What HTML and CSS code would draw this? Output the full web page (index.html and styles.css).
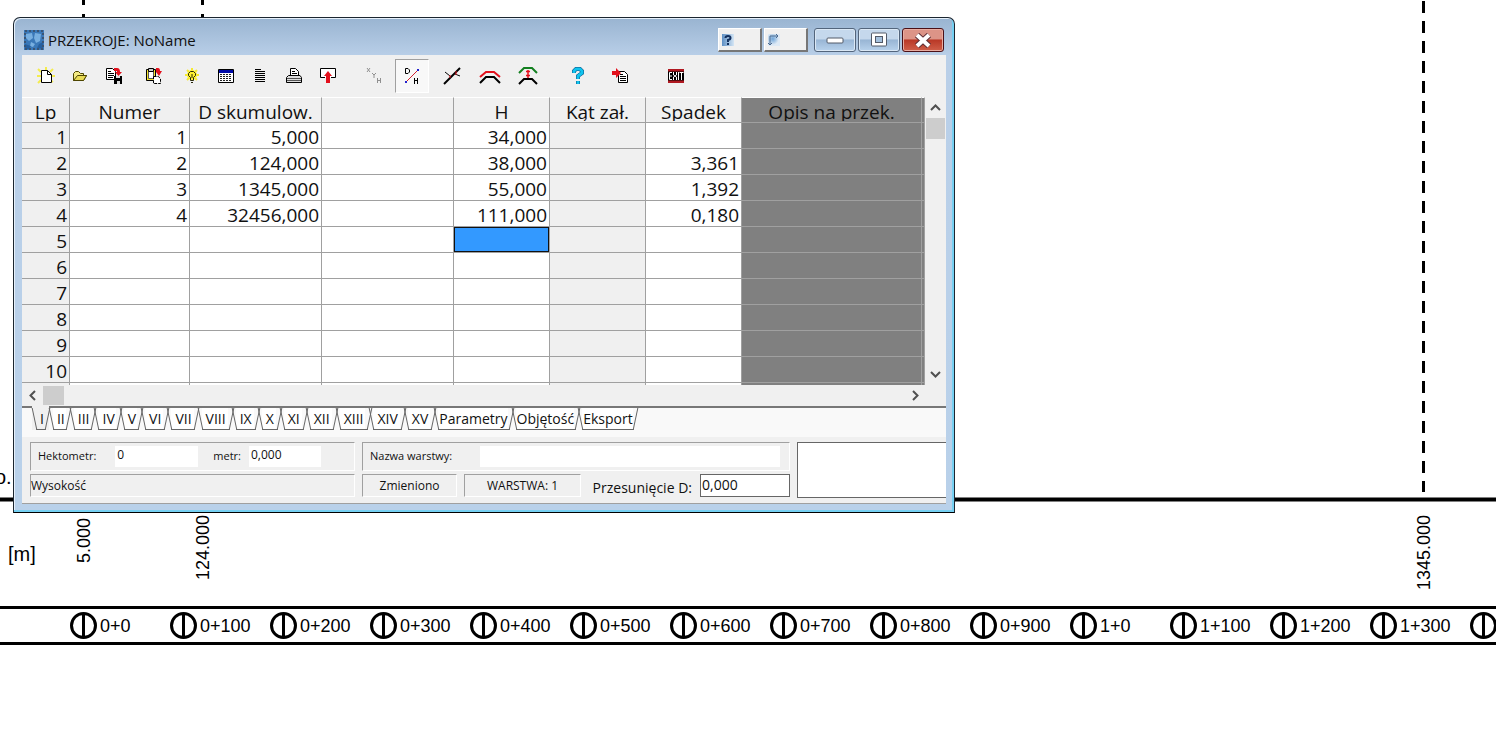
FILE: index.html
```
<!DOCTYPE html>
<html lang="pl">
<head>
<meta charset="utf-8">
<title>PRZEKROJE: NoName</title>
<link rel="stylesheet" href="styles.css">
</head>
<body>
<svg class="drawing" role="img" aria-label="Profil">
  <defs>
    <g id="mark"><circle r="12" fill="#fff" stroke="#000" stroke-width="3"/><path d="M0-12V12" stroke="#000" stroke-width="3"/></g>
  </defs>
  <g stroke="#000" stroke-width="3">
    <path d="M83.5 -6V17M202.5 -6V17" stroke-dasharray="11 9"/>
    <path d="M1423.500 1V492" stroke-dasharray="12 8"/>
    <line x1="0" x2="100%" y1="499.500" y2="499.500" stroke-width="4"/>
    <line x1="0" x2="100%" y1="607.500" y2="607.500"/>
    <line x1="0" x2="100%" y1="643.500" y2="643.500"/>
  </g>
  <g class="cad">
    <text class="unit" x="-5" y="484">o.</text>
    <text class="unit" x="8" y="561">[m]</text>
    <text transform="translate(90 563) rotate(-90)">5.000</text>
    <text transform="translate(209 580) rotate(-90)">124.000</text>
    <text transform="translate(1430 590) rotate(-90)">1345.000</text>
    <text x="100" y="632">0+0</text><text x="200" y="632">0+100</text><text x="300" y="632">0+200</text>
    <text x="400" y="632">0+300</text><text x="500" y="632">0+400</text><text x="600" y="632">0+500</text>
    <text x="700" y="632">0+600</text><text x="800" y="632">0+700</text><text x="900" y="632">0+800</text>
    <text x="1000" y="632">0+900</text><text x="1100" y="632">1+0</text><text x="1200" y="632">1+100</text>
    <text x="1300" y="632">1+200</text><text x="1400" y="632">1+300</text>
  </g>
  <use href="#mark" x="83.500" y="625.500"/><use href="#mark" x="183.500" y="625.500"/><use href="#mark" x="283.500" y="625.500"/>
  <use href="#mark" x="383.500" y="625.500"/><use href="#mark" x="483.500" y="625.500"/><use href="#mark" x="583.500" y="625.500"/>
  <use href="#mark" x="683.500" y="625.500"/><use href="#mark" x="783.500" y="625.500"/><use href="#mark" x="883.500" y="625.500"/>
  <use href="#mark" x="983.500" y="625.500"/><use href="#mark" x="1083.500" y="625.500"/><use href="#mark" x="1183.500" y="625.500"/>
  <use href="#mark" x="1283.500" y="625.500"/><use href="#mark" x="1383.500" y="625.500"/><use href="#mark" x="1483.500" y="625.500"/>
</svg>

<main class="window">
  <header class="titlebar">
    <svg class="app-icon" width="20" height="20" viewBox="0 0 20 20"><rect width="20" height="20" fill="#3a78b8"/><path d="M2 4L8 3L9 8L5 11L2 8ZM11 3L17 4L16 11L12 13L10 8ZM7 12L11 14L9 17L6 16Z" fill="#78afe0"/><path d="M1 14L7 16L5 19L1 19ZM15 14L19 12V19L13 18Z" fill="#27609f"/><rect x="1" y="1" width="18" height="18" fill="none" stroke="#3a5575" stroke-width="2" stroke-dasharray="2 2"/></svg>
    <h1>PRZEKROJE: NoName</h1>
    <div class="extra">
      <button class="flat" aria-label="Pomoc"><svg width="12" height="12" viewBox="0 0 12 12"><defs><linearGradient id="hb"><stop offset="0" stop-color="#5d8fc4"/><stop offset="1" stop-color="#d5e6f5"/></linearGradient></defs><rect width="12" height="12" fill="url(#hb)"/><path d="M3.500 4Q3.500 2 6 2T8.500 4Q8.500 5.500 6 6V8M6 9V11" fill="none" stroke="#12305e" stroke-width="2"/></svg></button>
      <button class="flat" aria-label="Obszar"><svg width="12" height="12" viewBox="0 0 12 12"><defs><radialGradient id="ob" cx=".4" cy=".4"><stop offset="0" stop-color="#6ea4d8"/><stop offset="1" stop-color="#dfeaf5"/></radialGradient></defs><rect width="12" height="12" fill="url(#ob)"/><path d="M2 11V2H10M0 9L2 11L4 9M8 0L10 2L8 4" fill="none" stroke="#496a91"/></svg></button>
    </div>
    <div class="controls">
      <button aria-label="Minimalizuj"><svg width="18" height="12" viewBox="0 0 18 12"><rect x="1" y="4" width="16" height="5" rx="1" fill="#fff" stroke="#535a68"/></svg></button>
      <button aria-label="Maksymalizuj"><svg width="18" height="16" viewBox="0 0 18 16"><rect x="1.500" y="1" width="15" height="13" rx="1" fill="#fff" stroke="#535a68"/><rect x="5.500" y="4.500" width="7" height="6" fill="#a4c0dc" stroke="#535a68"/></svg></button>
      <button class="close" aria-label="Zamknij"><svg width="18" height="15" viewBox="0 0 18 15"><path d="M3 2L15 13M15 2L3 13" stroke="#5c3036" stroke-width="6"/><path d="M3 2L15 13M15 2L3 13" stroke="#fff" stroke-width="4"/></svg></button>
    </div>
  </header>

  <div class="client">
    <nav class="toolbar" aria-label="Narzędzia">
      <button aria-label="Nowy"><svg viewBox="0 0 18 18"><path d="M1 2L4 5M9 0V3M16 2L13 5M0 9H4M1 16L4 13M16 15L13 13M14 9H18" stroke="#f4ec50" stroke-width="2"/><path d="M4.500 3.500H10.500L14.500 7.500V15.500H4.500Z" fill="#fff" stroke="#000"/><path d="M10.500 3.500V7.500H14.500" fill="none" stroke="#000"/></svg></button>
      <button aria-label="Otwórz"><svg viewBox="0 0 18 18"><path d="M2.500 13.500V6.500L4.500 4.500H7.500L9.500 6.500H12.500V8.500H15.500L12.500 13.500Z" fill="#f3ea84" stroke="#4d4500"/><path d="M2.500 13.500L6.500 8.500H15.500L12.500 13.500Z" fill="#e9db55" stroke="#4d4500"/></svg></button>
      <button aria-label="Zapisz"><svg viewBox="0 0 18 18"><path d="M1.500 1.500H7.500L10.500 4.500V12.500H1.500Z" fill="#fff" stroke="#000"/><path d="M3 4.500H6M3 6.500H9M3 8.500H9M3 10.500H8" stroke="#000"/><path d="M9 1H12Q15 1 15 5H17L13.500 9L10 5H12V4H9Z" fill="#e3101c"/><path d="M9 9H17V17H9Z" fill="#000"/><path d="M11 9H15V11H11ZM12 14H15V17H12Z" fill="#ddd"/></svg></button>
      <button class="gap-6" aria-label="Wklej"><svg viewBox="0 0 18 18"><path d="M1.500 2.500H10.500V13.500H1.500Z" fill="#f5e52e" stroke="#000"/><path d="M3.500 4.500H8.500V11.500H3.500Z" fill="#fff" stroke="#555"/><path d="M3.500 1.500H8.500V4.500H3.500Z" fill="#ccc" stroke="#000"/><path d="M11 1H13Q15 1 15 4H17L14 9L11 5Z" fill="#e3101c"/><path d="M8.500 9.500H13.500L15.500 12V16.500H8.500Z" fill="#fff" stroke="#000" stroke-dasharray="3 1"/></svg></button>
      <button class="gap-4" aria-label="Podpowiedź"><svg viewBox="0 0 18 18"><circle cx="9" cy="8" r="5" fill="#fff12e"/><path d="M9 1V3M4 3L6 5M14 3L12 5M2 8H4M14 8H16M4 13L6 11M14 13L12 11" stroke="#f6ea30" stroke-width="2"/><path d="M7.500 10.500L5.500 8.500V6.500L7.500 4.500H10.500L12.500 6.500V8.500L10.500 10.500V13.500H7.500ZM9 7V11M8 15.500H10" fill="none" stroke="#26260a"/></svg></button>
      <button aria-label="Tabela"><svg viewBox="0 0 18 18"><path d="M1.500 2.500H16.500V15.500H1.500Z" fill="#fff" stroke="#000"/><path d="M2 3H16V6H2Z" fill="#000ba8"/><path d="M3 7.500H15M3 9.500H15M3 11.500H15M3 13.500H15" stroke="#222" stroke-dasharray="2 1"/></svg></button>
      <button aria-label="Lista"><svg viewBox="0 0 18 18"><path d="M4 2.500H10M4 4.500H14M4 6.500H14M4 8.500H14M4 10.500H14M4 12.500H14M4 14.500H14" stroke="#000"/></svg></button>
      <button aria-label="Drukuj"><svg viewBox="0 0 18 18"><path d="M5.500 8.500V1.500H10.500L13.500 4.500V8.500Z" fill="#fff" stroke="#000"/><path d="M7 4.500H10M7 6.500H12" stroke="#000"/><path d="M3.500 8.500H15L16.500 10.500V15.500H1.500V10.500Z" fill="#ddd" stroke="#000"/><path d="M2 11.500H16M2 13.500H16" stroke="#555"/></svg></button>
      <button aria-label="Eksportuj"><svg viewBox="0 0 18 18"><path d="M1.500 10.500V1.500H16.500V10.500H12M1.500 10.500H6" fill="#fff" stroke="#000"/><path d="M9 4L13 9H11V16H7V9H5Z" fill="#e3101c"/></svg></button>
      <button class="gap-12" aria-label="XYH"><svg viewBox="0 0 18 18"><path d="M2 1L5 5M5 1L2 5M7 6L9 8L11 6M9 8V11M12.500 11V16M15.500 11V16M12 13.500H16" fill="none" stroke="#909090"/></svg></button>
      <button class="pressed gap-4" aria-label="D/H"><svg viewBox="0 0 18 18"><path d="M2.500 1.500H5L6.500 3V5L5 6.500H2.500ZM11.500 11V17M14.500 11V17M12 13.500H15" fill="none" stroke="#000"/><path d="M3 15L15 3" stroke="#d02030"/><path d="M2 14H4V16H2ZM14 2H16V4H14Z" fill="#22c"/></svg></button>
      <button class="gap-6" aria-label="Nachylenie"><svg viewBox="0 0 18 18"><path d="M1 17L17 1" stroke="#000" stroke-width="2"/><path d="M2 5L7 9M12 7L17 9" stroke="#000"/><path d="M7 8V11M13 4V8" stroke="#e3101c"/></svg></button>
      <button class="gap-4" aria-label="Przekrój"><svg width="22" viewBox="0 0 22 18"><path d="M1 10L7 5H15L21 10" fill="none" stroke="#e3101c" stroke-width="2"/><path d="M1 16L7 10H15L21 16" fill="none" stroke="#000" stroke-width="2"/></svg></button>
      <button class="gap-4" aria-label="Przesuń przekrój"><svg width="20" viewBox="0 0 20 18"><path d="M1 6L6 1H14L19 6" fill="none" stroke="#138020" stroke-width="2"/><path d="M1 17L6 12H14L19 17" fill="none" stroke="#000" stroke-width="2"/><path d="M10 3V11M8 4.500H12M8 8.500H12" stroke="#e3101c" stroke-width="1.500"/></svg></button>
      <button class="gap-16" aria-label="Pomoc programu"><svg viewBox="0 0 18 18"><path d="M5 6V4L7 2H11L13 4V6L9 9V12M9 14V17" fill="none" stroke="#0a4c80" stroke-width="4"/><path d="M5 6V4L7 2H11L13 4V6L9 9V12M9 14V17" fill="none" stroke="#10c4ee" stroke-width="3"/></svg></button>
      <button class="gap-8" aria-label="Import"><svg viewBox="0 0 18 18"><path d="M7.500 4.500H13.500L16.500 7.500V15.500H7.500Z" fill="#fff" stroke="#000"/><path d="M9 7.500H12M9 9.500H15M9 11.500H15M9 13.500H15" stroke="#000"/><path d="M1 4H5V1L10 6L5 11V8H1Z" fill="#e3101c"/></svg></button>
      <button class="gap-22" aria-label="Wyjście"><svg viewBox="0 0 18 18"><path d="M1 2H17V16H1Z" fill="#b01820"/><path d="M1 4.500H17V13.500H1Z" fill="#000"/><path d="M5 5.500H2.500V12.500H5M2.500 9H5M6.500 5V8L9.500 10V13M9.500 5V8L6.500 10V13M11.500 5V13M12.500 5.500H16.500M14.500 5.500V13" fill="none" stroke="#fff"/></svg></button>
    </nav>

    <div class="sheet">
      <div class="grid-clip">
        <table>
          <colgroup><col class="c-lp"><col class="c-num"><col class="c-wide"><col class="c-wide"><col class="c-mid"><col class="c-mid"><col class="c-mid"><col class="c-desc"><col></colgroup>
          <thead><tr><th><span>Lp</span></th><th><span>Numer</span></th><th><span>D skumulow.</span></th><th></th><th><span>H</span></th><th><span>Kąt zał.</span></th><th><span>Spadek</span></th><th class="dark"><span>Opis na przek.</span></th><th class="dark"></th></tr></thead>
          <tbody>
            <tr><th>1</th><td>1</td><td>5,000</td><td></td><td>34,000</td><td class="off"></td><td></td><td class="dark"></td><td class="dark"></td></tr>
            <tr><th>2</th><td>2</td><td>124,000</td><td></td><td>38,000</td><td class="off"></td><td>3,361</td><td class="dark"></td><td class="dark"></td></tr>
            <tr><th>3</th><td>3</td><td>1345,000</td><td></td><td>55,000</td><td class="off"></td><td>1,392</td><td class="dark"></td><td class="dark"></td></tr>
            <tr><th>4</th><td>4</td><td>32456,000</td><td></td><td>111,000</td><td class="off"></td><td>0,180</td><td class="dark"></td><td class="dark"></td></tr>
            <tr><th>5</th><td></td><td></td><td></td><td class="selected"></td><td class="off"></td><td></td><td class="dark"></td><td class="dark"></td></tr>
            <tr><th>6</th><td></td><td></td><td></td><td></td><td class="off"></td><td></td><td class="dark"></td><td class="dark"></td></tr>
            <tr><th>7</th><td></td><td></td><td></td><td></td><td class="off"></td><td></td><td class="dark"></td><td class="dark"></td></tr>
            <tr><th>8</th><td></td><td></td><td></td><td></td><td class="off"></td><td></td><td class="dark"></td><td class="dark"></td></tr>
            <tr><th>9</th><td></td><td></td><td></td><td></td><td class="off"></td><td></td><td class="dark"></td><td class="dark"></td></tr>
            <tr><th>10</th><td></td><td></td><td></td><td></td><td class="off"></td><td></td><td class="dark"></td><td class="dark"></td></tr>
            <tr><th></th><td></td><td></td><td></td><td></td><td class="off"></td><td></td><td class="dark"></td><td class="dark"></td></tr>
          </tbody>
        </table>
      </div>
      <div class="vscroll">
        <button aria-label="W górę"><svg width="11" height="7" viewBox="0 0 11 7"><path d="M1 6L5.500 1.500L10 6"/></svg></button>
        <div class="thumb"></div>
        <button class="end" aria-label="W dół"><svg width="11" height="7" viewBox="0 0 11 7"><path d="M1 1L5.500 5.500L10 1"/></svg></button>
      </div>
    </div>
    <div class="hscroll">
      <button aria-label="W lewo"><svg width="7" height="11" viewBox="0 0 7 11"><path d="M6 1L1.500 5.500L6 10"/></svg></button>
      <div class="thumb"></div>
      <button class="end" aria-label="W prawo"><svg width="7" height="11" viewBox="0 0 7 11"><path d="M1 1L5.500 5.500L1 10"/></svg></button>
    </div>

    <div class="tabs" role="tablist">
      <button class="active" role="tab" aria-selected="true">I</button><button role="tab">II</button><button role="tab">III</button><button role="tab">IV</button><button role="tab">V</button><button class="wide" role="tab">VI</button><button class="wide" role="tab">VII</button><button class="wide" role="tab">VIII</button><button class="wide" role="tab">IX</button><button class="wide" role="tab">X</button><button class="wide" role="tab">XI</button><button class="wide" role="tab">XII</button><button class="wide" role="tab">XIII</button><button class="wide" role="tab">XIV</button><button class="wide" role="tab">XV</button><button class="named" role="tab">Parametry</button><button class="named" role="tab">Objętość</button><button class="named" role="tab">Eksport</button>
    </div>

    <div class="status">
      <div class="left">
        <div class="panel fields">
          <label for="hm">Hektometr:</label><input id="hm" class="hm" value="0">
          <label for="m">metr:</label><input id="m" class="m" value="0,000">
        </div>
        <div class="panel hint">Wysokość</div>
      </div>
      <div class="middle">
        <div class="panel fields">
          <label for="layer">Nazwa warstwy:</label><input id="layer" class="layer" value="">
        </div>
        <div class="line">
          <div class="panel changed">Zmieniono</div>
          <div class="panel current">WARSTWA: 1</div>
          <label class="shift-label" for="shift">Przesunięcie D:</label><input id="shift" class="shift" value="0,000">
        </div>
      </div>
      <textarea class="memo" aria-label="Uwagi"></textarea>
    </div>
  </div>
</main>
</body>
</html>
```
FILE: styles.css
```
* { box-sizing: border-box; }

body {
  margin: 0;
  min-height: 100vh;
  overflow: hidden;
  background: #fff;
  color: #111;
  font-family: "Open Sans", "Noto Sans", sans-serif;
}

button, input, textarea {
  margin: 0;
  padding: 0;
  border: 0;
  border-radius: 0;
  background: none;
  color: inherit;
  font: inherit;
}

.drawing {
  position: absolute;
  inset: 0;
  width: 100%;
  height: 100%;
}

.cad {
  fill: #000;
  font-family: "Liberation Sans", sans-serif;
  font-size: 18px;
}

.cad .unit { font-size: 20px; }

.window {
  position: absolute;
  left: 13px;
  top: 17px;
  width: 942px;
  padding: 0 8px;
  border: 1px solid #1c2630;
  border-bottom-color: #000;
  border-radius: 7px 7px 0 0;
  background: linear-gradient(#99b4d1, #b9cfe8 38px, #b9d1ea);
  box-shadow: inset -2px -2px #76d0f2, inset 1px 1px #e6f0fa;
  padding-bottom: 8px;
}

.titlebar {
  display: flex;
  align-items: center;
  height: 37px;
  padding: 7px 2px 0 1px;
}

.app-icon { margin: 0 4px 0 1px; }

.titlebar h1 {
  flex: 1;
  margin: 0;
  font-size: 15px;
  font-weight: 400;
  line-height: 20px;
}

.extra, .controls { display: flex; gap: 2px; }
.controls { margin-left: 6px; }

.flat {
  display: flex;
  width: 44px;
  height: 24px;
  padding: 5px 3px;
  border: 1px solid #fff;
  border-right: 2px solid #777;
  border-bottom: 2px solid #777;
  background: #f0f0f0;
}

.flat svg { flex: none; }

.controls button {
  display: flex;
  align-items: center;
  justify-content: center;
  width: 42px;
  height: 24px;
  border: 1px solid #53657c;
  border-radius: 3px;
  background: linear-gradient(#c5d8ec 45%, #98b5d4 50%, #b8d2ec);
  box-shadow: inset 0 0 0 1px #dbe8f5;
}

.controls .close {
  border-color: #4b1017;
  background: linear-gradient(#dc9487 45%, #b93826 50%, #d0604a);
  box-shadow: inset 0 0 0 1px #e8ada2;
}

.client { background: #f0f0f0; border-bottom: 1px solid #a0a0a0; }

.toolbar {
  display: flex;
  align-items: center;
  height: 42px;
  padding-left: 7px;
}

.toolbar button {
  display: flex;
  align-items: center;
  justify-content: center;
  width: 34px;
  height: 34px;
}

.toolbar svg { height: 18px; min-width: 18px; }
.toolbar .gap-4 { margin-left: 4px; }
.toolbar .gap-6 { margin-left: 6px; }
.toolbar .gap-8 { margin-left: 8px; }
.toolbar .gap-12 { margin-left: 12px; }
.toolbar .gap-16 { margin-left: 16px; }
.toolbar .gap-22 { margin-left: 22px; }

.toolbar .pressed {
  border: 1px solid #a0a0a0;
  border-right-color: #fff;
  border-bottom-color: #fff;
  background: #f8f8f8;
}

.sheet { display: flex; height: 288px; }
.grid-clip { flex: 1; overflow: hidden; }

table {
  width: 100%;
  border-collapse: separate;
  border-spacing: 0;
  table-layout: fixed;
  font-size: 19px;
  line-height: 22px;
}

.c-lp { width: 48px; }
.c-num { width: 120px; }
.c-wide { width: 132px; }
.c-mid { width: 96px; }
.c-desc { width: 180px; }

th, td {
  height: 26px;
  padding: 3px 2px 0 0;
  border-right: 1px solid #a0a0a0;
  border-bottom: 1px solid #a0a0a0;
  background: #fff;
  font-weight: 400;
  text-align: right;
}

th { background: #f0f0f0; }

thead th {
  padding: 0;
  border-top: 1px solid #fff;
  text-align: center;
  vertical-align: top;
}

thead span {
  display: block;
  height: 23px;
  overflow: hidden;
  line-height: 28px;
}

.off { background: #f0f0f0; }
th.dark, td.dark { background: #808080; }
.selected { background: #3399ff; box-shadow: inset 0 0 0 1px #111; }

.vscroll {
  display: flex;
  flex-direction: column;
  width: 21px;
}

.vscroll button, .hscroll button {
  display: flex;
  align-items: center;
  justify-content: center;
}

.vscroll button { height: 21px; }
.vscroll .thumb { width: 19px; height: 21px; margin-left: 1px; background: #cdcdcd; }
.vscroll .end { margin-top: auto; }

.vscroll path, .hscroll path { fill: none; stroke: #505050; stroke-width: 2; }

.hscroll { display: flex; align-items: center; height: 21px; padding-right: 21px; }
.hscroll button { width: 20px; height: 20px; }
.hscroll .thumb { width: 21px; height: 19px; margin-left: 1px; background: #cdcdcd; }
.hscroll .end { margin-left: auto; }

.tabs {
  display: flex;
  height: 31px;
  padding-left: 10px;
  border-top: 2px solid #777;
  background: #f9f9f9;
}

.tabs button {
  position: relative;
  height: 22px;
  padding: 0 5px 0 8px;
  background: linear-gradient(#fff, #fff) center / calc(100% - 8px) 100% no-repeat;
  font-size: 14px;
  line-height: 20px;
}

.tabs .wide { padding: 0 6px 0 8px; }
.tabs .named { padding: 0 4px 0 5px; }

.tabs button::before, .tabs button::after {
  content: "";
  position: absolute;
  top: 0;
  bottom: 0;
  border-bottom: 1px solid #666;
}

.tabs button::before {
  left: 2px;
  right: 50%;
  border-left: 1px solid #666;
  transform: skewX(12deg);
}

.tabs button::after {
  left: 50%;
  right: 0;
  border-right: 1px solid #666;
  transform: skewX(-12deg);
}

.tabs .active { background: #f0f0f0; box-shadow: 0 -2px #f0f0f0; }

.status {
  display: grid;
  grid-template-columns: 325px 428px 1fr;
  column-gap: 7px;
  padding: 5px 0 5px 8px;
  font-size: 12px;
}

.left, .middle { display: grid; grid-template-rows: 29px 23px; row-gap: 3px; }

.panel {
  border: 1px solid #a0a0a0;
  border-right-color: #fff;
  border-bottom-color: #fff;
  line-height: 21px;
}

.fields { display: flex; align-items: center; padding-left: 7px; font-size: 11px; }
.fields label { padding-bottom: 3px; }
.fields input { height: 21px; padding: 0 0 5px 2px; background: #fff; font-size: 12px; }
.fields .hm { width: 83px; margin: 0 15px 0 19px; }
.fields .m { width: 72px; margin-left: 8px; }
.fields .layer { flex: 1; margin: 0 9px 0 28px; }

.line { display: flex; }
.changed { width: 95px; text-align: center; }
.current { width: 117px; margin-left: 7px; text-align: center; }
.shift-label { flex: 1; padding: 2px 8px 0 0; font-size: 14px; line-height: 23px; text-align: right; white-space: nowrap; }
.shift { width: 90px; padding: 0 0 2px 1px; border: 1px solid #666; background: #fff; font-size: 14px; }

.memo {
  width: 100%;
  height: 56px;
  border: 1px solid #666;
  border-right: 0;
  background: #fff;
  resize: none;
}
```
